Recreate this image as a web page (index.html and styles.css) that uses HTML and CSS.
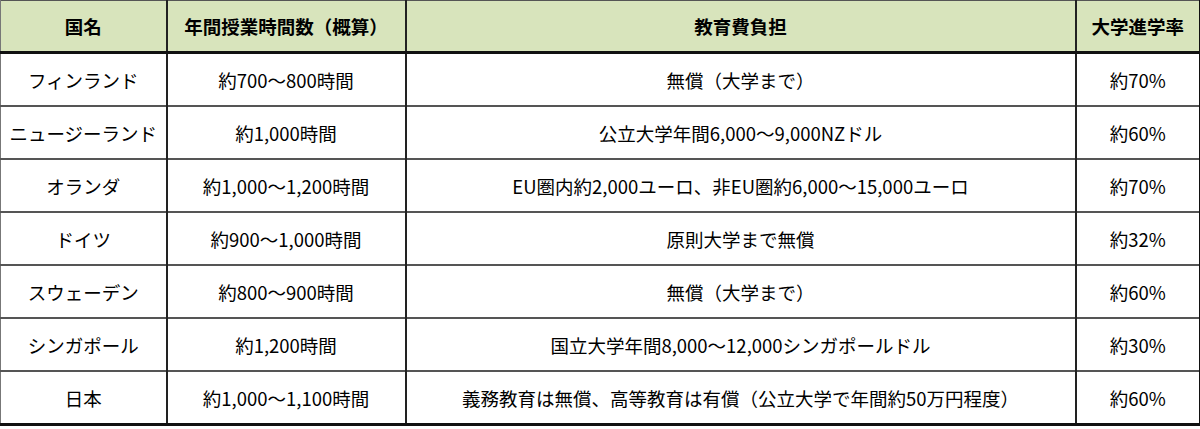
FILE: index.html
```html
<!DOCTYPE html>
<html lang="ja">
<head>
<meta charset="utf-8">
<link rel="stylesheet" href="styles.css">
</head>
<body>
<table class="grid">
  <colgroup>
    <col class="c1"><col class="c2"><col class="c3"><col class="c4">
  </colgroup>
  <thead>
    <tr><th>国名</th><th>年間授業時間数（概算）</th><th>教育費負担</th><th>大学進学率</th></tr>
  </thead>
  <tbody>
    <tr><td>フィンランド</td><td>約700～800時間</td><td>無償（大学まで）</td><td>約70%</td></tr>
    <tr><td>ニュージーランド</td><td>約1,000時間</td><td>公立大学年間6,000～9,000NZドル</td><td>約60%</td></tr>
    <tr><td>オランダ</td><td>約1,000～1,200時間</td><td>EU圏内約2,000ユーロ、非EU圏約6,000～15,000ユーロ</td><td>約70%</td></tr>
    <tr><td>ドイツ</td><td>約900～1,000時間</td><td>原則大学まで無償</td><td>約32%</td></tr>
    <tr><td>スウェーデン</td><td>約800～900時間</td><td>無償（大学まで）</td><td>約60%</td></tr>
    <tr><td>シンガポール</td><td>約1,200時間</td><td>国立大学年間8,000～12,000シンガポールドル</td><td>約30%</td></tr>
    <tr><td>日本</td><td>約1,000～1,100時間</td><td>義務教育は無償、高等教育は有償（公立大学で年間約50万円程度）</td><td>約60%</td></tr>
  </tbody>
</table>
</body>
</html>
```
FILE: styles.css
```css
html, body {
  margin: 0;
  padding: 0;
  background: #ffffff;
}
.grid {
  width: 1200px;
  table-layout: fixed;
  border-collapse: collapse;
  font-family: "Noto Sans CJK JP", "Liberation Sans", sans-serif;
  font-size: 18.5px;
  color: #000;
  border-left: 1px solid #777;
  border-right: 3px solid #111;
  border-bottom: 3px solid #111;
  border-top: 1px solid #555;
}
.c1 { width: 166px; }
.c2 { width: 239px; }
.c3 { width: 670px; }
.c4 { width: 125px; }
.grid th, .grid td {
  text-align: center;
  vertical-align: middle;
  padding: 0 2px;
  white-space: nowrap;
  line-height: 22px;
}
.grid th {
  background: #d8e4bc;
  font-weight: 700;
  height: 50px;
  border-left: 2px solid #222;
  border-bottom: 3px solid #111;
}
.grid td {
  height: 51px;
  border-left: 2px solid #222;
  border-top: 2px solid #555;
}
.grid th:first-child, .grid td:first-child {
  border-left: 1px solid #777;
}
```
